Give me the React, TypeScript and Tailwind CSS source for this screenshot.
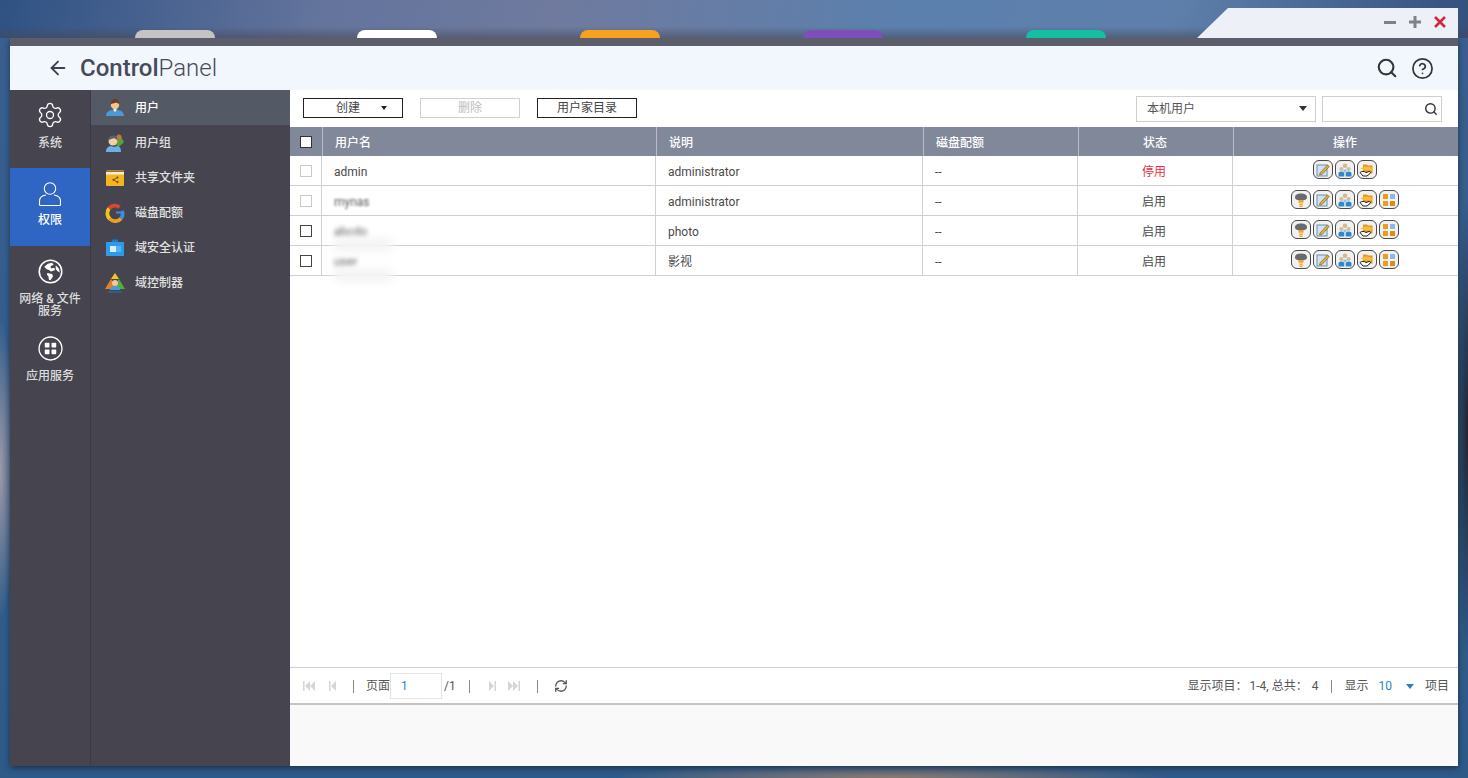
import React from 'react'
import { ArrowLeft, CircleHelp, RefreshCw, Search, Settings } from 'lucide-react'

const font = 'font-["Roboto","Noto_Sans_CJK_SC",sans-serif]'

const UserIcon = () => (
  <svg width="24" height="26" viewBox="0 0 24 26" fill="none" stroke="#fff" strokeWidth="1.100">
    <circle cx="12" cy="7.500" r="5.700" />
    <path d="M8 14c-4 .6-6.500 2.600-6.500 6v3.500c0 .6.400 1 1 1h19c.6 0 1-.4 1-1V20c0-3.400-2.500-5.400-6.500-6" />
  </svg>
)

const GlobeIcon = () => (
  <svg width="25" height="25" viewBox="0 0 24 24">
    <circle cx="12" cy="12" r="10.800" fill="none" stroke="#fff" strokeWidth="1.500" />
    <path d="M6 7.500l3.500-3 4-1 1.500 2-3 1.500.5 2 3-.5 1 2-4 1.500-2-1.500-2.500-1z" fill="#fff" />
    <path d="M9 13.500l4.500 1 1 2-2.500 4-1.500-.5-.5-3.500-1.500-1.500zM17 6l3 3 1 4-2.500-1.500-1.500-2z" fill="#fff" />
  </svg>
)

const AppsIcon = () => (
  <svg width="25" height="25" viewBox="0 0 24 24">
    <circle cx="12" cy="12" r="11" fill="none" stroke="#fff" strokeWidth="1.300" />
    <rect x="6.500" y="6.500" width="4.500" height="4.500" rx=".6" fill="#fff" />
    <rect x="13" y="6.500" width="4.500" height="4.500" rx=".6" fill="#fff" />
    <rect x="6.500" y="13" width="4.500" height="4.500" rx=".6" fill="#fff" />
    <rect x="13" y="13" width="4.500" height="4.500" rx=".6" fill="#fff" />
  </svg>
)

const NavUser = () => (
  <svg width="20" height="20" viewBox="0 0 20 20">
    <path d="M1 18c0-4 3-5.500 6-6l3 1.500 3-1.500c3 .5 6 2 6 6z" fill="#4a9ad8" />
    <path d="M8 12l2 2 2-2-1-1H9z" fill="#f4f4f4" />
    <circle cx="10" cy="7" r="4.200" fill="#f2c48e" />
    <path d="M5.800 6.500C5.500 3 8 1 10 1s4.500 2 4.200 5.500C13 4.500 11 4.500 10 5c-1.500.5-3 0-4.200 1.500z" fill="#6b3f1c" />
  </svg>
)

const NavGroup = () => (
  <svg width="20" height="20" viewBox="0 0 20 20">
    <path d="M9 8l3-5 4 1 3 5-3 3-3 2z" fill="#5b9f3b" />
    <circle cx="14" cy="4" r="2.500" fill="#c9763a" />
    <path d="M1 19c0-4 2-5.500 5-6l3 1 3-1c3 .5 4 2 4 6z" fill="#6cb1e4" />
    <circle cx="8" cy="8" r="4.500" fill="#f3cfa6" />
    <path d="M3.500 8C3 3.500 6 2.500 8 2.500s5 1 4.500 5.500c-1-2-3-3-4.500-2.500-1.500.5-3.500.5-4.500 2.500z" fill="#56616f" />
  </svg>
)

const NavFolder = () => (
  <svg width="20" height="20" viewBox="0 0 20 20">
    <path d="M1 4.500C1 3.500 1.500 2.500 2.500 2.500H18c.6 0 1 .4 1 1V7H1z" fill="#f2ecd8" />
    <path d="M1 2.500h18v1.500H1z" fill="#a6701c" />
    <path d="M1 6.500h18v10c0 1-.5 1.500-1.500 1.500h-15c-1 0-1.500-.5-1.500-1.500z" fill="#f3b61f" />
    <path d="M12.500 9.500l-4 2.300 4 2.300" fill="none" stroke="#7a4d10" strokeWidth=".9" />
    <circle cx="8.500" cy="11.800" r="1.100" fill="#7a4d10" />
    <circle cx="12.500" cy="9.500" r="1.100" fill="#7a4d10" />
    <circle cx="12.500" cy="14.100" r="1.100" fill="#7a4d10" />
  </svg>
)

const NavQuota = () => (
  <svg width="20" height="20" viewBox="0 0 20 20" fill="none" strokeWidth="3.800">
    <path d="M14.500 4.200A7.500 7.500 0 0 0 4 5.500" stroke="#d9472f" />
    <path d="M4 5.500A7.500 7.500 0 0 0 5 16" stroke="#f2c31b" />
    <path d="M5 16a7.500 7.500 0 0 0 11 -.5" stroke="#f0a01c" />
    <path d="M16 15.500A7.500 7.500 0 0 0 17 8" stroke="#3c8fe0" />
    <path d="M11 9.500h6" stroke="#3c8fe0" strokeWidth="2" />
  </svg>
)

const NavDomain = () => (
  <svg width="20" height="20" viewBox="0 0 20 20">
    <path d="M7 1.500h6V5H7z" fill="#1f79c9" />
    <path d="M1 4h18v14H1z" fill="#2d9be8" />
    <path d="M5 8h6v6H5z" fill="#d9eefc" />
    <path d="M11 8h5v6h-5z" fill="#55b3ef" />
  </svg>
)

const NavController = () => (
  <svg width="20" height="20" viewBox="0 0 20 20">
    <path d="M10 0l4 6H6z" fill="#f0cb1e" />
    <path d="M6 6l-6 10h7l3-4z" fill="#ea7d22" />
    <path d="M14 6l6 10h-7l-3-4z" fill="#52b03a" />
    <circle cx="10" cy="10" r="3" fill="#f3c89a" />
    <path d="M5 17c0-3 2-4 5-4s5 1 5 4z" fill="#4a9ad8" />
    <path d="M3 19h14" stroke="#2d6fb0" strokeWidth="1" />
  </svg>
)

const KeyGlyph = () => (
  <svg width="14" height="16" viewBox="0 0 14 16">
    <path d="M1 5.500C1 2.500 3.500 1.500 7 1.500s6 1 6 4c0 2-2.500 3-6 3s-6-1-6-3z" fill="#6a6b70" />
    <path d="M4.500 8h5v2.500h-1v4.500h-3v-4.500h-1z" fill="#f0a52c" />
    <path d="M6.500 10.500h1V12h-1zM6.500 13h1v1h-1z" fill="#fff" />
  </svg>
)

const EditGlyph = () => (
  <svg width="14" height="14" viewBox="0 0 14 14">
    <rect x="1" y="2" width="10" height="11" fill="#d3e1f2" stroke="#6f8db3" strokeWidth="1" />
    <path d="M4 10l7.500-8 1.800 1.500L6 11.500 3.500 12z" fill="#dcb23a" stroke="#6b5a20" strokeWidth=".6" />
  </svg>
)

const UsersGlyph = () => (
  <svg width="14" height="14" viewBox="0 0 14 14">
    <circle cx="7" cy="2.800" r="2.300" fill="#d9b98c" />
    <circle cx="3.400" cy="6" r="2.100" fill="#cfc09c" />
    <circle cx="10.600" cy="6" r="2.100" fill="#cfc09c" />
    <path d="M.5 13.500V10.500c0-1.200 1-2 2.900-2s2.900.8 2.900 2v3z" fill="#2f86c9" />
    <path d="M7.700 13.500V10.500c0-1.200 1-2 2.900-2s2.900.8 2.900 2v3z" fill="#2f86c9" />
    <path d="M5.500 6.500h3v3h-3z" fill="#8cc4ec" />
  </svg>
)

const ShareGlyph = () => (
  <svg width="15" height="14" viewBox="0 0 15 14">
    <path d="M4 1.500h4l1 1h4.500v8H4z" fill="#e7961f" />
    <path d="M1.500 5.500c3-2.500 6.500-2.500 9.500-1.500l3 1.500-2 2H6z" fill="#f6bc3c" />
    <path d="M1 9.500c2-1.500 4-1.500 6 0l3-1c1.500 0 2 1 1 2l-3 2.500H4z" fill="#fff" stroke="#222" strokeWidth="1" />
  </svg>
)

const AppsGlyph = () => (
  <svg width="14" height="14" viewBox="0 0 14 14">
    <rect x="1" y="1" width="5" height="5" fill="#ee9a1f" />
    <rect x="8" y="1" width="5" height="5" fill="#8ab8ea" />
    <rect x="1" y="8" width="5" height="5" fill="#ee9a1f" />
    <rect x="8" y="8" width="5" height="5" fill="#e08a1a" />
  </svg>
)

const ActionBtn = ({ children }: { children: React.ReactNode }) => (
  <span className="flex h-[19px] w-5 items-center justify-center rounded-[6px] border border-[#4a4a4a] bg-[#f1f1f1]">{children}</span>
)

const navItems = [
  { label: '用户', icon: <NavUser /> },
  { label: '用户组', icon: <NavGroup /> },
  { label: '共享文件夹', icon: <NavFolder /> },
  { label: '磁盘配额', icon: <NavQuota /> },
  { label: '域安全认证', icon: <NavDomain /> },
  { label: '域控制器', icon: <NavController /> },
]

const rows = [
  { name: 'admin', desc: 'administrator', status: '停用', full: false, checkbox: 'border-[#c9c9c9]', blur: '', smudge: false },
  { name: 'mynas', desc: 'administrator', status: '启用', full: true, checkbox: 'border-[#c9c9c9]', blur: 'blur-[1px] opacity-90', smudge: false },
  { name: 'abcdo', desc: 'photo', status: '启用', full: true, checkbox: 'border-[#444]', blur: 'blur-[2px] opacity-90', smudge: true },
  { name: 'user', desc: '影视', status: '启用', full: true, checkbox: 'border-[#444]', blur: 'blur-[2px] opacity-90', smudge: true },
]

const headCols = 'grid grid-cols-[32px_334px_267px_155px_155px_1fr]'
const rowCols = 'grid grid-cols-[31px_334px_267px_155px_155px_1fr]'

const Triangle = ({ dir, bar }: { dir: 'l' | 'r'; bar?: boolean }) => (
  <svg width="12" height="10" viewBox="0 0 12 10" fill="#d6d6d6" className="block">
    {dir === 'l' ? (
      <>
        {bar && <rect x="0" y="0" width="1.500" height="10" />}
        {bar && <path d="M7 0v10L2 5z" />}
        <path d={bar ? 'M12 0v10L7 5z' : 'M10 0v10L5 5z'} />
        {!bar && <rect x="3" y="0" width="1.500" height="10" />}
      </>
    ) : (
      <>
        {bar && <rect x="10.500" y="0" width="1.500" height="10" />}
        {bar && <path d="M5 0v10l5-5z" />}
        <path d={bar ? 'M0 0v10l5-5z' : 'M2 0v10l5-5z'} />
        {!bar && <rect x="7.500" y="0" width="1.500" height="10" />}
      </>
    )}
  </svg>
)

const Sep = ({ className = '' }: { className?: string }) => <span className={`block h-[13px] w-px shrink-0 bg-[#8a8a8a] ${className}`} />

export default function App() {
  return (
    <div className={`${font} flex h-[778px] w-[1468px] flex-col overflow-hidden bg-[radial-gradient(ellipse_16px_150px_at_0_470px,#a09aa6,transparent),radial-gradient(ellipse_280px_14px_at_890px_778px,#8c7a70,transparent),radial-gradient(ellipse_14px_230px_at_100%_430px,#20262e,transparent),linear-gradient(180deg,#3a5f90,#2e5a88)] text-[12px] text-[#4a4a4a]`}>
      {/* desktop behind the window */}
      <div className="relative h-[38px] shrink-0 bg-[linear-gradient(180deg,transparent_70%,rgba(70,70,85,.55)_100%),linear-gradient(100deg,#2f5283_0%,#64749d_22%,#6f7a9e_38%,#5b80ae_62%,#5f7fab_80%,#34507d_100%)]">
        <div className="absolute top-[30px] left-[135px] h-2 w-[80px] rounded-t-[14px] bg-[#c4c4c4]" />
        <div className="absolute top-[30px] left-[357px] h-2 w-[80px] rounded-t-[14px] bg-white" />
        <div className="absolute top-[30px] left-[580px] h-2 w-[80px] rounded-t-[14px] bg-[#f6a21e]" />
        <div className="absolute top-[30px] left-[803px] h-2 w-[80px] rounded-t-[14px] bg-[#7d4fb8]" />
        <div className="absolute top-[30px] left-[1026px] h-2 w-[80px] rounded-t-[14px] bg-[#14bfa2]" />
        <div className="absolute top-2 left-[1197px] flex h-[30px] w-[261px] items-start justify-end gap-[13px] bg-[#edf1f7] pt-2 pr-[12px] [clip-path:polygon(31px_0,100%_0,100%_100%,0_100%)]">
          <span className="mt-[5px] h-[3px] w-3 bg-[#7f8186]" />
          <svg width="12" height="12" viewBox="0 0 12 12" fill="#7f8186"><path d="M4.500 0h3v4.500H12v3H7.500V12h-3V7.500H0v-3h4.500z" /></svg>
          <svg width="12" height="12" viewBox="0 0 12 12" stroke="#d9263f" strokeWidth="2.600"><path d="M1 1l10 10M11 1L1 11" /></svg>
        </div>
      </div>

      {/* window */}
      <div className="mx-[10px] flex h-[728px] w-[1448px] flex-col bg-[#5d5e6c] pt-2 shadow-[0_2px_6px_rgba(0,0,0,.45)]">
        <header className="flex h-[44px] shrink-0 items-center bg-[#f2f6fd] pr-[24px] pl-[37px]">
          <ArrowLeft size={22} strokeWidth={2} className="text-[#3d4150]" />
          <div className="ml-[11px] text-[24px] leading-none text-[#474a5c]">
            <span className="font-medium">Control</span>
            <span className="font-light">Panel</span>
          </div>
          <div className="ml-auto flex items-center gap-[13px] text-[#33363f]">
            <Search size={22} strokeWidth={2.300} />
            <CircleHelp size={23} strokeWidth={1.800} />
          </div>
        </header>

        <div className="flex min-h-0 flex-1">
          {/* first level */}
          <aside className="flex w-[81px] shrink-0 flex-col border-r border-[#3a3a43] bg-[#46454f] text-center text-[12px] font-medium text-[#dcdcdc]">
            <div className="flex h-[78px] flex-col items-center pt-[11px]">
              <Settings size={28} strokeWidth={1.100} className="text-white" />
              <span className="mt-[7px] leading-[14px]">系统</span>
            </div>
            <div className="flex h-[78px] w-[80px] flex-col items-center bg-[#2f66c4] pt-[13px] text-white">
              <UserIcon />
              <span className="mt-[6px] leading-[14px]">权限</span>
            </div>
            <div className="flex h-[90px] flex-col items-center pt-[13px]">
              <GlobeIcon />
              <span className="mt-[9px] leading-[12px]">网络 &amp; 文件<br />服务</span>
            </div>
            <div className="flex flex-col items-center">
              <AppsIcon />
              <span className="mt-[8px] leading-[14px]">应用服务</span>
            </div>
          </aside>

          {/* second level */}
          <nav className="flex w-[199px] shrink-0 flex-col bg-[#46454f] text-[12px] font-medium text-[#e0e0e0]">
            {navItems.map((item, i) => (
              <div key={item.label} className={`flex h-[35px] items-center gap-[10px] pl-[14px] ${i === 0 ? 'bg-[#545966] text-white' : ''}`}>
                {item.icon}
                <span>{item.label}</span>
              </div>
            ))}
          </nav>

          {/* content */}
          <main className="flex min-w-0 flex-1 flex-col bg-white">
            <div className="flex h-[37px] shrink-0 items-center px-[13px] pr-[16px]">
              <button className="mb-[1px] flex h-5 w-[100px] items-center border border-[#222] pl-[32px] text-[#444]">
                创建
                <span className="ml-[21px] h-0 w-0 border-x-[3px] border-t-[4px] border-x-transparent border-t-[#222]" />
              </button>
              <button className="mb-[1px] ml-[17px] h-5 w-[100px] border border-[#d0d0d0] text-[#bdbdbd]">删除</button>
              <button className="mb-[1px] ml-[17px] h-5 w-[100px] border border-[#222] text-[#444]">用户家目录</button>
              <div className="ml-auto flex h-[26px] w-[180px] items-center border border-[#cfcfcf] pr-[8px] pl-[10px] text-[#555]">
                本机用户
                <span className="ml-auto h-0 w-0 border-x-[4px] border-t-[5px] border-x-transparent border-t-[#333]" />
              </div>
              <div className="ml-[6px] flex h-[26px] w-[120px] items-center justify-end border border-[#cfcfcf] pr-[3px]">
                <Search size={14} strokeWidth={2.400} className="text-[#333]" />
              </div>
            </div>

            {/* table */}
            <div className={`${headCols} h-[29px] shrink-0 bg-[#81889a] text-[12px] font-medium text-white`}>
              <div className="flex items-center justify-center">
                <span className="h-3 w-3 border border-[#333] bg-white" />
              </div>
              <div className="flex items-center border-l border-[#b8bcc7] pt-[2px] pl-[12px]">用户名</div>
              <div className="flex items-center border-l border-[#b8bcc7] pt-[2px] pl-[12px]">说明</div>
              <div className="flex items-center border-l border-[#b8bcc7] pt-[2px] pl-[12px]">磁盘配额</div>
              <div className="flex items-center justify-center border-l border-[#b8bcc7] pt-[2px] pr-[2px]">状态</div>
              <div className="flex items-center justify-center border-l border-[#b8bcc7] pt-[2px] pr-[2px]">操作</div>
            </div>
            {rows.map((r) => (
              <div key={r.name} className={`${rowCols} h-[30px] shrink-0 border-b border-[#cfd0d4] text-[12px] text-[#4a4a4a]`}>
                <div className="flex items-center justify-center">
                  <span className={`h-3 w-3 border ${r.checkbox}`} />
                </div>
                <div className="relative flex items-center border-l border-[#cfd0d4] pt-[2px] pl-[12px]">
                  <span className={r.blur}>{r.name}</span>
                  {r.smudge && <span className="absolute top-[22px] left-[12px] h-[14px] w-[58px] bg-[#f4f4f4] blur-[4px]" />}
                </div>
                <div className="flex items-center border-l border-[#cfd0d4] pt-[2px] pl-[12px]">{r.desc}</div>
                <div className="flex items-center border-l border-[#cfd0d4] pt-[2px] pl-[12px]">--</div>
                <div className={`flex items-center justify-center border-l border-[#cfd0d4] pt-[2px] pr-[2px] ${r.full ? '' : 'text-[#e8303f]'}`}>{r.status}</div>
                <div className="flex items-center justify-center gap-[2px] border-l border-[#cfd0d4] pr-[2px] pb-[2px]">
                  {r.full && <ActionBtn><KeyGlyph /></ActionBtn>}
                  <ActionBtn><EditGlyph /></ActionBtn>
                  <ActionBtn><UsersGlyph /></ActionBtn>
                  <ActionBtn><ShareGlyph /></ActionBtn>
                  {r.full && <ActionBtn><AppsGlyph /></ActionBtn>}
                </div>
              </div>
            ))}
            <div className="flex-1" />

            {/* pager */}
            <div className="flex h-[38px] shrink-0 items-center border-t border-b-2 border-t-[#cfcfcf] border-b-[#c4c4c4] pt-[1px] pr-[9px] pl-[13px] text-[12px] text-[#555]">
              <Triangle dir="l" bar />
              <span className="ml-[11px]"><Triangle dir="l" /></span>
              <Sep className="ml-[15px]" />
              <span className="ml-[12px]">页面</span>
              <span className="flex h-[26px] w-[52px] items-center border border-[#e4e4e4] pl-[10px] text-[#2b86c5]">1</span>
              <span className="ml-[2px]">/1</span>
              <Sep className="ml-[13px]" />
              <span className="ml-[17px]"><Triangle dir="r" /></span>
              <span className="ml-[9px]"><Triangle dir="r" bar /></span>
              <Sep className="ml-[17px]" />
              <RefreshCw size={14} strokeWidth={2.200} className="ml-[16px] text-[#555]" />
              <span className="ml-auto">显示项目：</span>
              <span className="ml-[2px]">1-4, 总共：</span>
              <span className="ml-[4px]">4</span>
              <Sep className="mr-[12px] ml-[13px]" />
              <span>显示</span>
              <span className="ml-[10px] text-[#2b86c5]">10</span>
              <span className="ml-[14px] h-0 w-0 border-x-[4px] border-t-[5px] border-x-transparent border-t-[#2b7fc0]" />
              <span className="ml-[11px]">项目</span>
            </div>
            <div className="h-[61px] shrink-0 bg-[#f9f9f9]" />
          </main>
        </div>
      </div>
    </div>
  )
}
